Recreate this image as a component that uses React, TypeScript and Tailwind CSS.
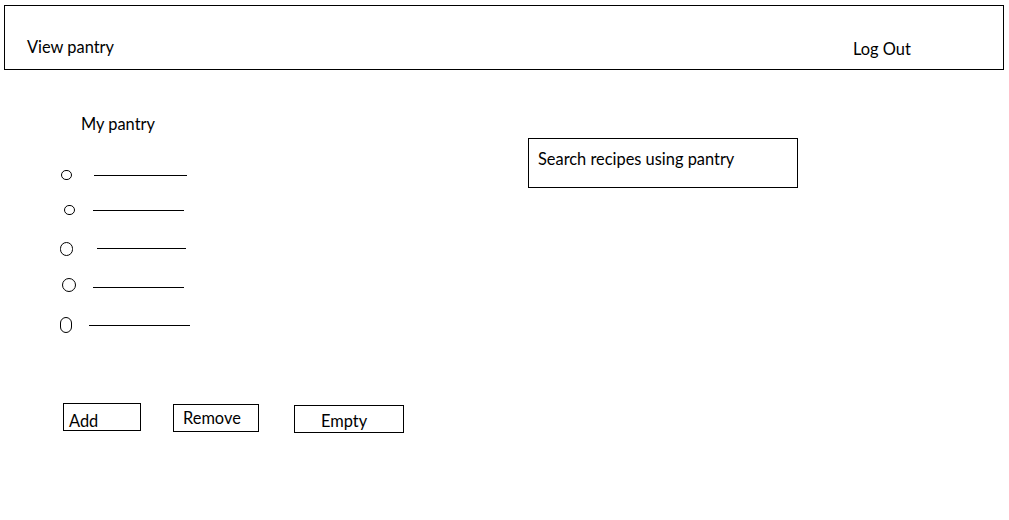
import React from "react";

type Row = { top: number; cx: number; cw: number; ch: number; lml: number; lw: number; lmt: number };

const rows: Row[] = [
  { top: 37, cx: 1, cw: 11, ch: 10, lml: 22, lw: 93, lmt: 5 },
  { top: 25, cx: 4, cw: 11, ch: 10, lml: 18, lw: 91, lmt: 5 },
  { top: 27, cx: 0, cw: 13, ch: 14, lml: 24, lw: 89, lmt: 6 },
  { top: 22, cx: 2, cw: 14, ch: 14, lml: 17, lw: 91, lmt: 9 },
  { top: 25, cx: 0, cw: 12, ch: 16, lml: 17, lw: 101, lmt: 8 },
];

export default function App() {
  return (
    <div className="w-[1009px] h-[520px] overflow-hidden bg-white text-black [font-family:Lato,'Open_Sans',sans-serif]">
      <header className="ml-[4px] mt-[5px] flex h-[65px] w-[1000px] items-start border border-black text-[16.4px] leading-[18px]">
        <span className="ml-[22px] mt-[32px] w-[826px] flex-none">View pantry</span>
        <span className="mt-[34px]">Log Out</span>
      </header>

      <main className="flex items-start">
        <section className="ml-[60px] flex w-[468px] flex-none flex-col">
          <h2 className="ml-[21px] mt-[45px] text-[16.4px] leading-[18px] font-normal">My pantry</h2>
          {rows.map((r, i) => (
            <div key={i} className="flex items-start" style={{ marginTop: r.top }}>
              <span
                className="flex-none rounded-full border border-black"
                style={{ marginLeft: r.cx, width: r.cw, height: r.ch }}
              />
              <span
                className="h-px flex-none bg-black"
                style={{ marginLeft: r.lml, width: r.lw, marginTop: r.lmt }}
              />
            </div>
          ))}
          <div className="mt-[70px] flex items-start text-[16.4px] leading-[18px]">
            <button className="ml-[3px] h-[28px] w-[78px] flex-none border border-black pl-[5px] pt-[8px] text-left">
              Add
            </button>
            <button className="ml-[32px] mt-[1px] h-[28px] w-[86px] flex-none border border-black pl-[9px] pt-0 text-left">
              Remove
            </button>
            <button className="ml-[35px] mt-[2px] h-[28px] w-[110px] flex-none border border-black pl-[26px] pt-[3px] text-left">
              Empty
            </button>
          </div>
        </section>

        <div className="mt-[68px] h-[50px] w-[270px] flex-none border border-black pl-[9px] pt-[10px] text-[16.4px] leading-[19px]">
          Search recipes using pantry
        </div>
      </main>
    </div>
  );
}
